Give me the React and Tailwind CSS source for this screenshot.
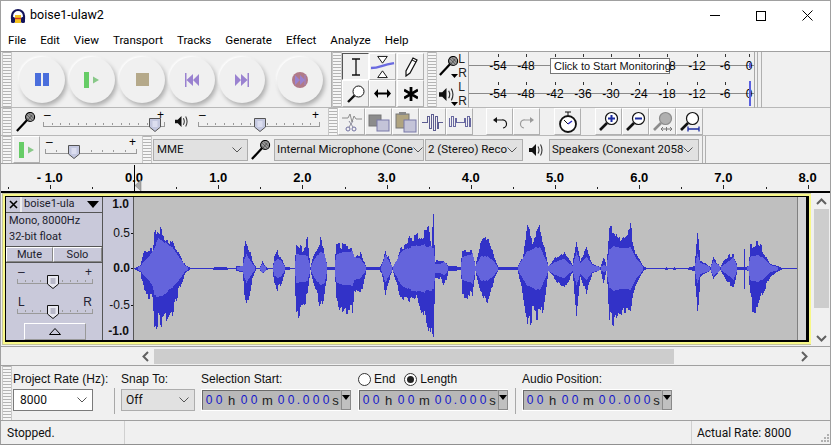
import React from "react";

const sans = "font-['Liberation_Sans',Arial,sans-serif]";
const ui = "font-['Roboto',sans-serif]";

// x, up, down, rmsUp, rmsDown (pixels from the centre line)
const envelope = [
  [134,1,1,1,1],[140,4,4,3,3],[144,20,25,8,8],[148,20,27,12,12],[152,20,28,18,18],[154,35,55,22,28],[158,43,50,30,28],[162,35,58,28,28],[168,30,50,24,22],[172,28,42,22,20],[178,15,22,13,13],[185,4,5,3,3],[190,1,1,1,1],
  [212,1,1,1,1],[214,2,2,1,1],[226,2,2,1,1],[228,1,1,1,1],[235,1,1,1,1],[236,3,3,2,2],[242,3,4,3,3],[244,20,25,10,10],[246,29,35,15,15],[249,20,25,10,10],[252,8,10,5,5],[256,1,1,1,1],[259,1,1,1,1],[262,7,6,5,5],[266,2,2,2,2],[268,1,1,1,1],[272,1,1,1,1],[274,12,15,8,8],[277,17,22,10,10],[281,10,15,8,8],[285,2,2,1,1],[294,1,1,1,1],
  [296,23,47,15,15],[302,20,35,14,14],[307,30,30,13,13],[310,2,2,2,2],[314,15,18,10,10],[320,28,40,17,17],[324,18,30,15,15],[327,2,2,2,2],[332,2,2,1,1],[334,2,2,2,2],[336,25,30,15,15],[340,25,45,17,17],[348,20,40,17,17],[352,20,40,17,17],[354,10,20,12,12],[360,15,27,10,10],[366,2,2,2,2],[372,2,2,1,1],[379,2,2,1,1],[381,5,5,3,3],[385,18,25,14,14],[392,2,2,2,2],[396,8,14,8,8],[400,20,28,17,17],[410,30,33,22,22],[416,30,28,23,23],[424,35,50,24,24],[426,35,58,22,22],[428,42,67,22,22],[431,25,55,22,22],[433,47,60,22,22],[435,8,10,5,5],[440,8,10,5,5],[444,8,18,7,7],[448,3,3,2,2],[453,3,3,2,2],[460,2,2,1,1],
  [462,18,25,12,12],[470,18,28,14,14],[472,18,30,16,16],[475,3,3,3,3],[480,25,25,12,12],[487,35,35,13,13],[494,10,10,7,7],[498,2,2,1,1],[517,2,2,1,1],[522,12,22,10,10],[527,38,55,18,18],[532,30,45,20,20],[539,42,47,22,22],[544,22,35,12,12],[548,3,3,3,3],[554,10,10,7,7],[564,18,20,10,10],[572,4,5,3,3],[576,30,42,17,17],[580,8,8,6,6],[586,20,25,12,12],[592,5,5,4,4],[600,2,2,2,2],[603,12,14,4,4],[606,3,3,3,3],[609,40,45,20,20],[613,40,50,22,22],[618,27,40,22,22],[622,30,45,20,20],[624,32,40,20,20],[630,40,42,22,22],[636,13,15,10,10],[643,3,3,2,2],[646,1,1,1,1],
  [664,1,1,1,1],[666,2,2,1,1],[668,1,1,1,1],[672,1,1,1,1],[674,2,2,1,1],[676,1,1,1,1],[686,1,1,1,1],[690,2,2,2,2],[694,3,3,2,2],[697,39,43,15,15],[700,8,10,6,6],[706,5,5,4,4],[710,2,2,2,2],[713,11,10,8,8],[720,2,2,2,2],[726,12,14,6,6],[733,15,19,12,12],[737,2,2,2,2],[743,2,2,1,1],[744,18,20,1,1],[745,2,2,1,1],[748,3,3,3,3],[750,22,30,12,12],[752,22,40,13,13],[757,25,40,14,14],[762,20,25,12,12],[770,5,8,4,4],[778,3,3,2,2],[782,1,1,1,1],[797,1,1,1,1],
];

function level(x, i) {
  let k = 0;
  while (k < envelope.length - 2 && envelope[k + 1][0] <= x) k++;
  const a = envelope[k], b = envelope[k + 1];
  const t = Math.min(1, (x - a[0]) / (b[0] - a[0]));
  return a[i] + (b[i] - a[i]) * t;
}

function noise(x) {
  const s = Math.sin(x * 12.9898) * 43758.5453;
  return s - Math.floor(s) - 0.5;
}

function buildWave() {
  let outer = "", inner = "";
  for (let x = 134; x < 797; x++) {
    const up = Math.max(0, level(x, 1) - 1), down = Math.max(0, level(x, 2) - 1);
    const rms1 = level(x, 3), rms2 = level(x, 4);
    const n = up > 4 ? 1 + noise(Math.floor(x / 2)) * 0.35 : 1;
    const m = down > 4 ? 1 + noise(Math.floor(x / 2) + 31) * 0.35 : 1;
    const top = Math.round(71 - up * n);
    const bottom = Math.round(71 + down * m) + 1;
    outer += `M${x - 134} ${top}h1V${bottom}h-1z`;
    const f = rms1 > 4 ? 1 + noise(Math.floor(x / 3)) * 0.08 : 1;
    if (rms1 > 2) inner += `M${x - 134} ${Math.round(71 - (rms1 - 1) * f)}h1V${Math.round(71 + (rms2 - 1) * f) + 1}h-1z`;
  }
  return { outer, inner };
}

const wave = buildWave();

function Grip({ className = "" }) {
  return (
    <div className={`w-[10px] shrink-0 self-stretch border-x border-[#c8c8c8] bg-[repeating-linear-gradient(to_bottom,#b4b4b4_0,#b4b4b4_1px,#f6f6f6_1px,#f6f6f6_3px)] ${className}`} />
  );
}

function Mic({ size = 22, color = "#000" }) {
  return (
    <svg width={size} height={size} viewBox="0 0 22 22">
      <path d="M1 21 L12 9" stroke={color} strokeWidth="2.4" />
      <circle cx="15.5" cy="5.5" r="5" fill="#9a9a9a" stroke={color} strokeWidth="1.2" />
      <path d="M12 3l6 6M14 1.5l6 6M11 6l5 5M13 9l5-6" stroke="#333" strokeWidth=".7" />
    </svg>
  );
}

function Speaker({ size = 14 }) {
  return (
    <svg width={size} height={size} viewBox="0 0 14 14" fill="none">
      <path d="M0 5h3l4-4v12L3 9H0z" fill="#111" />
      <path d="M9 3.5q2 3.5 0 7M11.5 1.5q3 5.5 0 11" stroke="#333" strokeWidth="1.1" />
    </svg>
  );
}

function Thumb({ dark }) {
  return (
    <svg width="12" height="14" viewBox="0 0 12 14">
      <path d="M.5.5h11v8.500L6 13.500.5 9z" fill={dark ? "#e8e8f0" : "#c4c8e0"} stroke={dark ? "#111" : "#555"} />
      <path d="M3.500 4h5M3.500 6h5M3.500 8h5" stroke={dark ? "#8888a0" : "#f4f4ff"} />
    </svg>
  );
}

// horizontal slider: minus and plus marks above, tick line, thumb lies over the line
function Slider({ width, thumb, dark, left = "–", right = "+", ticks = 15, className = "" }) {
  return (
    <div className={`relative h-[22px] shrink-0 ${className}`} style={{ width }}>
      <span className={`${sans} absolute left-[1px] top-0 text-[12px] leading-[12px] ${dark ? "text-[#223]" : "text-black"}`}>{left}</span>
      <span className={`${sans} absolute right-[1px] top-0 text-[12px] leading-[12px] ${dark ? "text-[#223]" : "text-black"}`}>{right}</span>
      <div className="absolute left-0 right-0 top-[17px] h-[1px] bg-[#9a9a9a]" />
      <div className="absolute left-0 right-0 top-[13px] flex justify-between">
        {Array.from({ length: ticks }).map((_, i) => (
          <div key={i} className={`w-[1px] ${i === 0 || i === ticks - 1 ? "h-[4px]" : "h-[2px] mt-[1px]"} bg-[#9a9a9a]`} />
        ))}
      </div>
      <div className="absolute top-[9px]" style={{ left: thumb - 6 }}><Thumb dark={dark} /></div>
    </div>
  );
}

function RoundButton({ children, className = "" }) {
  return (
    <div className={`w-[46px] h-[46px] shrink-0 rounded-full bg-[#f0f0f0] flex items-center justify-center shadow-[2px_3px_4px_#b0b0b0,-1px_-1px_2px_#ffffff] ${className}`}>
      {children}
    </div>
  );
}

function ToolCell({ children, pressed, className = "" }) {
  return (
    <div className={`w-[27px] h-[27px] shrink-0 flex items-center justify-center border ${pressed ? "border-t-[#555] border-l-[#555] border-r-white border-b-white" : "border-t-white border-l-white border-r-[#b0b0b0] border-b-[#b0b0b0]"} ${className}`}>
      {children}
    </div>
  );
}

function Lens({ sign, gray, under }) {
  const c = gray ? "#8c8c8c" : "#111";
  return (
    <svg width="22" height="22" viewBox="0 0 22 22" fill="none">
      <circle cx="13.5" cy="7.5" r="6" fill={gray ? "#b0b0b0" : "#fff"} stroke={c} strokeWidth="1.2" />
      <path d="M9 12 L2 19" stroke={c} strokeWidth="2.6" />
      {sign === "+" && <path d="M10 7.5h7M13.5 4v7" stroke="#1a2aa0" strokeWidth="2" />}
      {sign === "-" && <path d="M10 7.5h7" stroke="#1a2aa0" strokeWidth="2" />}
      {under === "fit" && <path d="M9 18h11M9 15.5v5M20 15.5v5" stroke="#1a2aa0" strokeWidth="1.3" />}
      {under === "arrows" && <path d="M9 18h11M11 16l-2 2 2 2M18 16l2 2-2 2M14.5 16v4" stroke="#777" strokeWidth="1" />}
    </svg>
  );
}

function MeterRow({ active, covered, children }) {
  const labels = [["-54", 29], ["-48", 57], ["-42", 86], ["-36", 114], ["-30", 142], ["-24", 170], ["-18", 198], ["-12", 228], ["-6", 256], ["0", 280]];
  return (
    <div className="relative h-[28px] w-[287px] border-x border-[#a8a8a8]">
      <div className="absolute left-0 right-0 top-[13px] h-[1px] bg-[#8a8a8a]" />
      {labels.map(([t, x]) => (
        <React.Fragment key={t}>
          <div className="absolute top-[2px] w-[1px] h-[3px] bg-[#333]" style={{ left: x }} />
          {!(covered && covered.includes(t)) && (
            <span className={`${sans} absolute top-[7px] -translate-x-1/2 text-[12px] leading-[14px] text-black`} style={{ left: x }}>{t}</span>
          )}
        </React.Fragment>
      ))}
      {active ? (
        <div className="absolute left-[280px] top-[1px] h-[25px] w-[2px] bg-[#5a60e0]" />
      ) : (
        <div className="absolute left-[280px] top-[11px] h-[5px] w-[2px] bg-[#5a60e0]" />
      )}
      {children}
    </div>
  );
}

function Combo({ width, children, white }) {
  return (
    <div className={`${width} h-[22px] shrink-0 flex items-center justify-between pl-[2px] pr-[5px] border ${white ? "bg-white border-[#7a7a7a]" : "bg-[#e1e1e1] border-[#adadad]"} ${ui} text-[11.500px] text-[#111] whitespace-nowrap`}>
      <span>{children}</span>
      <svg className="shrink-0" width="10" height="6" viewBox="0 0 10 6" fill="none"><path d="M.5.5 5 5 9.5.5" stroke="#555" /></svg>
    </div>
  );
}

function TimeBox() {
  const cells = [["0",10],["0",10],["h",15,1],["0",10],["0",10],["m",17,1],["0",10],["0",10],[".",5],["0",10],["0",10],["0",10],["s",9,1]];
  return (
    <div className="w-[150px] h-[22px] shrink-0 flex border border-white bg-white">
      <div className={`flex-1 flex items-center pl-[1px] bg-[#b8b8b8] border border-t-[#6a6a6a] border-l-[#6a6a6a] border-r-[#b8b8b8] border-b-[#b8b8b8] ${sans}`}>
        {cells.map(([c, w, unit], i) => (
          <span key={i} className={`text-center leading-none ${unit ? "text-[13px] text-[#222]" : "text-[12px] text-[#1616c8]"}`} style={{ width: w }}>{c}</span>
        ))}
      </div>
      <div className="w-[10px] shrink-0 bg-[#c0c0c0] border border-[#8a8a8a] flex justify-center pt-[4px]">
        <svg width="8" height="5" viewBox="0 0 8 5"><path d="M0 0h8L4 5z" fill="#000" /></svg>
      </div>
    </div>
  );
}

function Radio({ on }) {
  return (
    <div className="w-[13px] h-[13px] rounded-full border border-[#333] bg-white flex items-center justify-center">
      {on && <div className="w-[7px] h-[7px] rounded-full bg-[#222]" />}
    </div>
  );
}

function Ruler() {
  const units = [-1, 0, 1, 2, 3, 4, 5, 6, 7, 8];
  const toX = (u) => 133 + u * 84.2;
  return (
    <div className={`relative h-[27px] shrink-0 w-full bg-[#f0f0f0] ${sans}`}>
      {units.map((u) => (
        <React.Fragment key={u}>
          <span className="absolute top-[6px] -translate-x-1/2 text-[13px] font-bold leading-[15px] text-black" style={{ left: toX(u) }}>
            {u < 0 ? "- 1.0" : `${u}.0`}
          </span>
          <div className="absolute top-[21px] h-[4px] w-[1px] bg-[#222]" style={{ left: toX(u) }} />
          <div className="absolute top-[23px] h-[2px] w-[1px] bg-[#222]" style={{ left: toX(u) - 42 }} />
        </React.Fragment>
      ))}
      <div className="absolute left-[133px] top-[1px] h-[26px] w-[1px] bg-black" />
      <svg className="absolute left-[134px] top-[16px]" width="7" height="11" viewBox="0 0 7 11"><path d="M6 0v11L0 5.500z" fill="#a8a8a8" stroke="#777" strokeWidth=".5" /></svg>
    </div>
  );
}

function TrackPanel() {
  return (
    <div className={`w-[96px] shrink-0 h-full bg-[#c9c9da] ${ui} text-[11px] text-[#1c1c2c] flex flex-col`}>
      <div className="h-[16px] shrink-0 flex border-b border-[#555]">
        <div className="w-[15px] flex items-center justify-center border-r border-[#eee]">
          <svg width="9" height="9" viewBox="0 0 9 9"><path d="M1 1l7 7M8 1L1 8" stroke="#000" strokeWidth="1.6" /></svg>
        </div>
        <div className="flex-1 flex items-center justify-between pl-[2px] pr-[3px] border-l border-[#eee]">
          <span>boise1-ula</span>
          <svg width="12" height="7" viewBox="0 0 12 7"><path d="M0 0h12L6 7z" fill="#000" /></svg>
        </div>
      </div>
      <div className="h-[34px] shrink-0 pl-[3px] leading-[16px] border-b border-[#555]">
        <div>Mono, 8000Hz</div>
        <div>32-bit float</div>
      </div>
      <div className="h-[16px] shrink-0 flex border-b border-[#555] text-center leading-[14px]">
        <div className="w-[47px] border border-t-white border-l-white border-[#888]">Mute</div>
        <div className="flex-1 border border-t-white border-l-white border-[#888]">Solo</div>
      </div>
      <div className="pl-[11px] pt-[3px]">
        <Slider width={76} thumb={36} dark ticks={11} />
      </div>
      <div className="pl-[11px] pt-[8px]">
        <Slider width={76} thumb={36} dark left="L" right="R" ticks={11} />
      </div>
      <div className="ml-[18px] mt-[5px] w-[62px] h-[17px] border border-t-white border-l-white border-[#999] flex items-center justify-center">
        <svg width="12" height="7" viewBox="0 0 12 7"><path d="M.5 6.5h11L6 .5z" fill="none" stroke="#000" /></svg>
      </div>
    </div>
  );
}

function VerticalRuler() {
  const marks = [["1.0", 7, true, false], ["0.5", 36, false, true], ["0.0", 71, true, true], ["-0.5", 108, false, true], ["-1.0", 134, true, false]];
  return (
    <div className={`relative w-[32px] shrink-0 h-full bg-[#c9c9da] border-x border-[#555] ${sans}`}>
      {marks.map(([t, y, bold, tick]) => (
        <div key={t} className="absolute right-0 flex items-center -translate-y-1/2" style={{ top: y }}>
          <span className={`text-[12px] leading-[14px] ${bold ? "font-bold" : ""} text-[#111] ${tick ? "mr-[1px]" : "mr-[4px]"}`}>{t}</span>
          {tick && <div className="w-[2px] h-[1px] bg-[#111]" />}
        </div>
      ))}
    </div>
  );
}

export default function App() {
  const menu = ["File", "Edit", "View", "Transport", "Tracks", "Generate", "Effect", "Analyze", "Help"];
  return (
    <div className="w-[831px] h-[445px] overflow-hidden bg-[#f0f0f0] flex flex-col border border-[#a0a0a0] border-b-[#909090] box-border">
      {/* title bar */}
      <div className="h-[29px] shrink-0 bg-white flex items-center">
        <svg className="ml-[9px]" width="16" height="16" viewBox="0 0 16 16" fill="none">
          <path d="M2 11V8a6 6 0 0 1 12 0v3" stroke="#14145a" strokeWidth="2.2" />
          <rect x="1" y="9" width="4" height="6" rx="1.5" fill="#14145a" />
          <rect x="11" y="9" width="4" height="6" rx="1.5" fill="#14145a" />
          <rect x="5" y="7" width="6" height="8" fill="#f2c020" />
          <path d="M5 10.5h6" stroke="#d03020" strokeWidth="1.4" />
        </svg>
        <span className={`${ui} ml-[4px] text-[12.500px] text-black`}>boise1-ulaw2</span>
        <div className="ml-auto flex items-center">
          <div className="w-[46px] flex justify-center"><div className="w-[10px] h-[1px] bg-black" /></div>
          <div className="w-[46px] flex justify-center"><div className="w-[10px] h-[10px] border border-black" /></div>
          <div className="w-[46px] flex justify-center">
            <svg width="11" height="11" viewBox="0 0 11 11"><path d="M.5.5l10 10M10.5.5l-10 10" stroke="#000" /></svg>
          </div>
        </div>
      </div>

      {/* menu */}
      <div className={`h-[21px] shrink-0 bg-white flex items-center gap-[14px] pl-[7px] ${ui} text-[11.600px] text-black`}>
        {menu.map((m) => <span key={m}>{m}</span>)}
      </div>

      {/* transport, tools, meters */}
      <div className="h-[57px] shrink-0 flex border-t border-[#a0a0a0] border-b border-b-[#b8b8b8] pl-[1px]">
        <Grip />
        <div className="w-[320px] shrink-0 flex items-center border-r border-[#b0b0b0] pl-[7px] gap-[4px]">
          <RoundButton>
            <div className="flex gap-[2px]"><div className="w-[6px] h-[13px] bg-[#4a6edc]" /><div className="w-[6px] h-[13px] bg-[#4a6edc]" /></div>
          </RoundButton>
          <RoundButton>
            <svg width="16" height="16" viewBox="0 0 16 16"><rect x="0" y="0" width="5" height="16" fill="#66cc66" /><path d="M9 4.5 15 8 9 11.500z" fill="#88c888" /></svg>
          </RoundButton>
          <RoundButton>
            <div className="w-[13px] h-[13px] bg-[#b5a98a]" />
          </RoundButton>
          <RoundButton>
            <svg width="14" height="14" viewBox="0 0 14 14"><path d="M0 0h1.500v14H0zM8 1v12L1.500 7zM14 1v12L8 7z" fill="#9a82d0" /></svg>
          </RoundButton>
          <RoundButton>
            <svg width="14" height="14" viewBox="0 0 14 14"><path d="M14 0h-1.500v14H14zM6 1v12l6.500-6zM0 1v12l6-6z" fill="#9a82d0" /></svg>
          </RoundButton>
          <RoundButton className="ml-[8px]">
            <svg width="16" height="16" viewBox="0 0 16 16"><circle cx="8" cy="8" r="8" fill="#b07a88" /><path d="M3 3v10l5-5zM8 3v10l5-5z" fill="#9a82d0" /><path d="M13 3v10" stroke="#9a82d0" /></svg>
          </RoundButton>
        </div>
        <Grip />
        <div className="w-[84px] shrink-0 flex flex-wrap content-start pt-[1px]">
          <ToolCell pressed>
            <svg width="12" height="18" viewBox="0 0 12 18" fill="none"><path d="M2 1h8M2 17h8M6 1v16" stroke="#111" strokeWidth="1.3" /></svg>
          </ToolCell>
          <ToolCell>
            <svg width="26" height="24" viewBox="0 0 26 24" fill="none"><path d="M8 1h10l-5 7zM8 23h10l-5-7z" fill="#fff" stroke="#111" /><path d="M1 13 Q6 13 12 11 T25 8" stroke="#6a6ae0" strokeWidth="2.5" /></svg>
          </ToolCell>
          <ToolCell className="ml-[1px]">
            <svg width="14" height="20" viewBox="0 0 14 20" fill="none"><path d="M9 1 13 3 6 16 2 19 2 14z" fill="#fff" stroke="#111" strokeWidth="1.2" /><path d="M8 3l4 2" stroke="#111" /></svg>
          </ToolCell>
          <ToolCell>
            <svg width="18" height="18" viewBox="0 0 18 18" fill="none"><circle cx="11.500" cy="6.500" r="5.500" fill="#fff" stroke="#111" /><path d="M7.500 10.500 1 17" stroke="#111" strokeWidth="2.400" /></svg>
          </ToolCell>
          <ToolCell>
            <svg width="17" height="9" viewBox="0 0 17 9"><path d="M0 4.500 4 0v3.500h9V0l4 4.500L13 9V5.500H4V9z" fill="#000" /></svg>
          </ToolCell>
          <ToolCell className="ml-[1px]">
            <svg width="14" height="14" viewBox="0 0 14 14" fill="none"><path d="M7 0v14M0 3l14 8M14 3 0 11" stroke="#000" strokeWidth="2.800" /></svg>
          </ToolCell>
        </div>
        <Grip className="ml-[1px]" />
        <div className="flex flex-col">
          {[
            { icon: <Mic size={20} />, active: false },
            { icon: <Speaker size={15} />, active: true },
          ].map((m, i) => (
            <div key={i} className="h-[28px] flex">
              <div className="relative w-[31px] shrink-0 flex items-center pl-[2px]">
                {m.icon}
                <svg className="absolute left-[14px] bottom-[2px]" width="7" height="4" viewBox="0 0 7 4"><path d="M0 0h7L3.500 4z" fill="#000" /></svg>
                <div className={`${sans} absolute right-[1px] top-0 text-[12px] leading-[14px] text-[#222]`}>L<br />R</div>
              </div>
              <MeterRow active={m.active} covered={i === 0 ? ["-42", "-36", "-30", "-24"] : null}>
                {i === 0 && (
                  <div className={`absolute z-10 left-[81px] top-[6px] h-[16px] w-[120px] bg-white border border-[#777] ${sans} text-[11px] leading-[14px] pl-[3px] whitespace-nowrap text-[#111]`}>
                    Click to Start Monitoring
                  </div>
                )}
              </MeterRow>
              <div className="ml-[2px] h-full w-[5px] border-x border-[#b0b0b0]" />
            </div>
          ))}
        </div>
      </div>

      {/* mixer + edit */}
      <div className="h-[28px] shrink-0 flex items-center border-b border-[#b8b8b8] pl-[1px]">
        <Grip />
        <div className="w-[31px] flex shrink-0 pl-[4px]"><Mic size={20} /></div>
        <Slider width={122} thumb={112} className="mb-[4px]" />
        <div className="w-[33px] shrink-0 flex justify-center"><Speaker size={13} /></div>
        <Slider width={122} thumb={62} className="mb-[4px]" />
        <div className="w-[8px] shrink-0" />
        <Grip />
        <ToolCell>
          <svg width="22" height="20" viewBox="0 0 22 20" fill="none"><path d="M1 6h6l2-4 2 8 2-6 2 3h6" stroke="#8c8c8c" /><path d="M12 9 8 15M8 9l4 6" stroke="#8c8c9c" /><circle cx="7" cy="17" r="2" stroke="#7070a0" /><circle cx="13" cy="17" r="2" stroke="#7070a0" /></svg>
        </ToolCell>
        <ToolCell>
          <svg width="22" height="20" viewBox="0 0 22 20"><rect x="1" y="3" width="12" height="11" fill="#8c8c8c" stroke="#777" /><rect x="9" y="8" width="12" height="11" fill="#c4c4d8" stroke="#7878a8" /></svg>
        </ToolCell>
        <ToolCell>
          <svg width="22" height="22" viewBox="0 0 22 22"><rect x="1" y="3" width="13" height="14" fill="#b0a480" stroke="#777" /><rect x="4" y="1" width="7" height="3" fill="#888" /><rect x="9" y="9" width="12" height="12" fill="#c4c4d8" stroke="#7878a8" /></svg>
        </ToolCell>
        <ToolCell>
          <svg width="22" height="18" viewBox="0 0 22 18" fill="none" shapeRendering="crispEdges"><path d="M0 9h5V3h2v12h2V1h2v16h2V3h2v12h1V9h5" stroke="#5c5c90" /></svg>
        </ToolCell>
        <ToolCell>
          <svg width="22" height="18" viewBox="0 0 22 18" fill="none" shapeRendering="crispEdges"><path d="M0 5v8h2V3h2v10h2V5h1v4h8V5h1v8h2V3h2v10h1V5" stroke="#6868a0" /></svg>
        </ToolCell>
        <div className="w-[13px] shrink-0" />
        <ToolCell>
          <svg width="16" height="14" viewBox="0 0 16 14" fill="none"><path d="M4 5h6a4 4 0 0 1 1 8" stroke="#111" strokeWidth="1.200" /><path d="M1 5l4-3v6z" fill="#111" /></svg>
        </ToolCell>
        <ToolCell>
          <svg width="16" height="14" viewBox="0 0 16 14" fill="none"><path d="M12 5H6a4 4 0 0 0-1 8" stroke="#9a9a9a" strokeWidth="1.200" /><path d="M15 5l-4-3v6z" fill="#9a9a9a" /></svg>
        </ToolCell>
        <div className="w-[14px] shrink-0" />
        <ToolCell>
          <svg width="20" height="22" viewBox="0 0 20 22" fill="none"><circle cx="10" cy="13" r="8" fill="#fff" stroke="#111" strokeWidth="1.800" /><path d="M10 1v3M7 1h6M10 13 6 9" stroke="#111" /><path d="M10 13l4-3" stroke="#2a2ac0" strokeWidth="1.400" /></svg>
        </ToolCell>
        <div className="w-[14px] shrink-0" />
        <ToolCell><Lens sign="+" /></ToolCell>
        <ToolCell><Lens sign="-" /></ToolCell>
        <ToolCell><Lens gray under="arrows" /></ToolCell>
        <ToolCell><Lens under="fit" /></ToolCell>
      </div>

      {/* device row */}
      <div className="h-[28px] shrink-0 flex items-center border-b border-[#a0a0a0] pl-[1px]">
        <Grip />
        <ToolCell className="ml-[1px]">
          <svg width="16" height="16" viewBox="0 0 16 16"><rect x="0" y="0" width="5" height="16" fill="#66cc66" /><path d="M9 4.500 15 8 9 11.500z" fill="#88c888" /></svg>
        </ToolCell>
        <div className="w-[5px] shrink-0" />
        <Slider width={92} thumb={29} ticks={9} className="mb-[6px]" />
        <div className="w-[5px] shrink-0" />
        <Grip />
        <div className="w-[1px] shrink-0" />
        <Combo width="w-[95px]"><span className="pl-[1px]">MME</span></Combo>
        <div className="w-[26px] shrink-0 flex justify-center"><Mic size={20} /></div>
        <Combo width="w-[150px]">Internal Microphone (Cone</Combo>
        <div className="w-[1px] shrink-0" />
        <Combo width="w-[98px]">2 (Stereo) Reco</Combo>
        <div className="w-[26px] shrink-0 flex justify-center"><Speaker size={14} /></div>
        <Combo width="w-[150px]">Speakers (Conexant 2058</Combo>
        <div className="ml-[3px] h-full w-[4px] border-x border-[#b0b0b0]" />
      </div>

      <Ruler />

      {/* track */}
      <div className="h-[155px] shrink-0 flex border-t-2 border-black">
        <div className="w-[810px] shrink-0 pl-[1px] pb-[1px] bg-[#f0f0f0]">
          <div className="h-full border border-[#c4c49c] border-r-0">
            <div className="h-full border-2 border-[#f8f888]">
              <div className="h-[146px] flex bg-[#d4d4d4] border-l border-t border-black border-b-[2px] border-r-[3px]">
                <TrackPanel />
                <VerticalRuler />
                <div className="w-[663px] shrink-0 bg-[#bfbfbf]">
                  <svg width="663" height="143" viewBox="0 0 663 143" shapeRendering="crispEdges">
                    <path d={wave.outer} fill="#3232c8" />
                    <path d={wave.inner} fill="#6464dc" />
                  </svg>
                </div>
                <div className="flex-1 border-l border-[#808080]" />
              </div>
            </div>
          </div>
        </div>
        <div className="flex-1 flex flex-col items-center ml-[2px] pt-[3px]">
          <svg className="mt-[2px]" width="11" height="7" viewBox="0 0 11 7" fill="none"><path d="M1 6 5.500 1.500 10 6" stroke="#606060" strokeWidth="2" /></svg>
          <div className="w-[15px] h-[99px] mt-[4px] bg-[#cdcdcd]" />
          <div className="flex-1" />
          <svg className="mb-[4px]" width="11" height="7" viewBox="0 0 11 7" fill="none"><path d="M1 1l4.500 4.500L10 1" stroke="#606060" strokeWidth="2" /></svg>
        </div>
      </div>

      {/* horizontal scrollbar */}
      <div className="h-[19px] shrink-0 flex items-center border-t border-[#a0a0a0]">
        <svg className="ml-[141px]" width="7" height="11" viewBox="0 0 7 11" fill="none"><path d="M6 1 1.500 5.500 6 10" stroke="#606060" strokeWidth="2" /></svg>
        <div className="ml-[5px] h-[15px] w-[520px] bg-[#cdcdcd]" />
        <svg className="ml-[127px]" width="7" height="11" viewBox="0 0 7 11" fill="none"><path d="M1 1l4.500 4.500L1 10" stroke="#606060" strokeWidth="2" /></svg>
      </div>

      {/* selection bar */}
      <div className={`flex-1 flex border-t border-[#a0a0a0] pl-[1px] ${sans} text-[12px] text-[#111]`}>
        <Grip />
        <div className="w-[102px] shrink-0 pl-[1px] pt-[6px] flex flex-col gap-[3px]">
          <span className="leading-[14px] whitespace-nowrap">Project Rate (Hz):</span>
          <Combo width="w-[80px]" white><span className="pl-[4px] text-[12px]">8000</span></Combo>
        </div>
        <div className="w-[1px] h-[26px] mt-[22px] bg-[#a8a8a8]" />
        <div className="w-[86px] shrink-0 pl-[6px] pt-[6px] flex flex-col gap-[3px]">
          <span className="leading-[14px]">Snap To:</span>
          <Combo width="w-[74px]"><span className="pl-[2px] text-[12px]">Off</span></Combo>
        </div>
        <div className="w-[157px] shrink-0 pt-[6px] flex flex-col gap-[3px]">
          <span className="leading-[14px]">Selection Start:</span>
          <TimeBox />
        </div>
        <div className="w-[157px] shrink-0 pt-[6px] flex flex-col gap-[3px]">
          <div className="h-[14px] flex items-center gap-[3px]">
            <Radio /><span>End</span>
            <div className="ml-[6px]"><Radio on /></div><span>Length</span>
          </div>
          <TimeBox />
        </div>
        <div className="w-[1px] h-[26px] mt-[22px] bg-[#a8a8a8]" />
        <div className="pl-[6px] pt-[6px] flex flex-col gap-[3px]">
          <span className="leading-[14px]">Audio Position:</span>
          <TimeBox />
        </div>
      </div>

      {/* status bar */}
      <div className={`h-[24px] shrink-0 flex items-center border-t border-[#a0a0a0] ${ui} text-[12px] text-[#111]`}>
        <div className="w-[124px] h-full flex items-center pl-[6px] border-r border-[#d0d0d0]">Stopped.</div>
        <div className="w-[567px] h-full border-r border-[#d0d0d0]" />
        <span className="pl-[5px]">Actual Rate: 8000</span>
        <svg className="ml-auto mr-[1px] mt-[10px]" width="9" height="9" viewBox="0 0 9 9" fill="#b0b0b0"><path d="M7 1h2v2H7zM4 4h2v2H4zM7 4h2v2H7zM1 7h2v2H1zM4 7h2v2H4zM7 7h2v2H7z" /></svg>
      </div>
    </div>
  );
}
